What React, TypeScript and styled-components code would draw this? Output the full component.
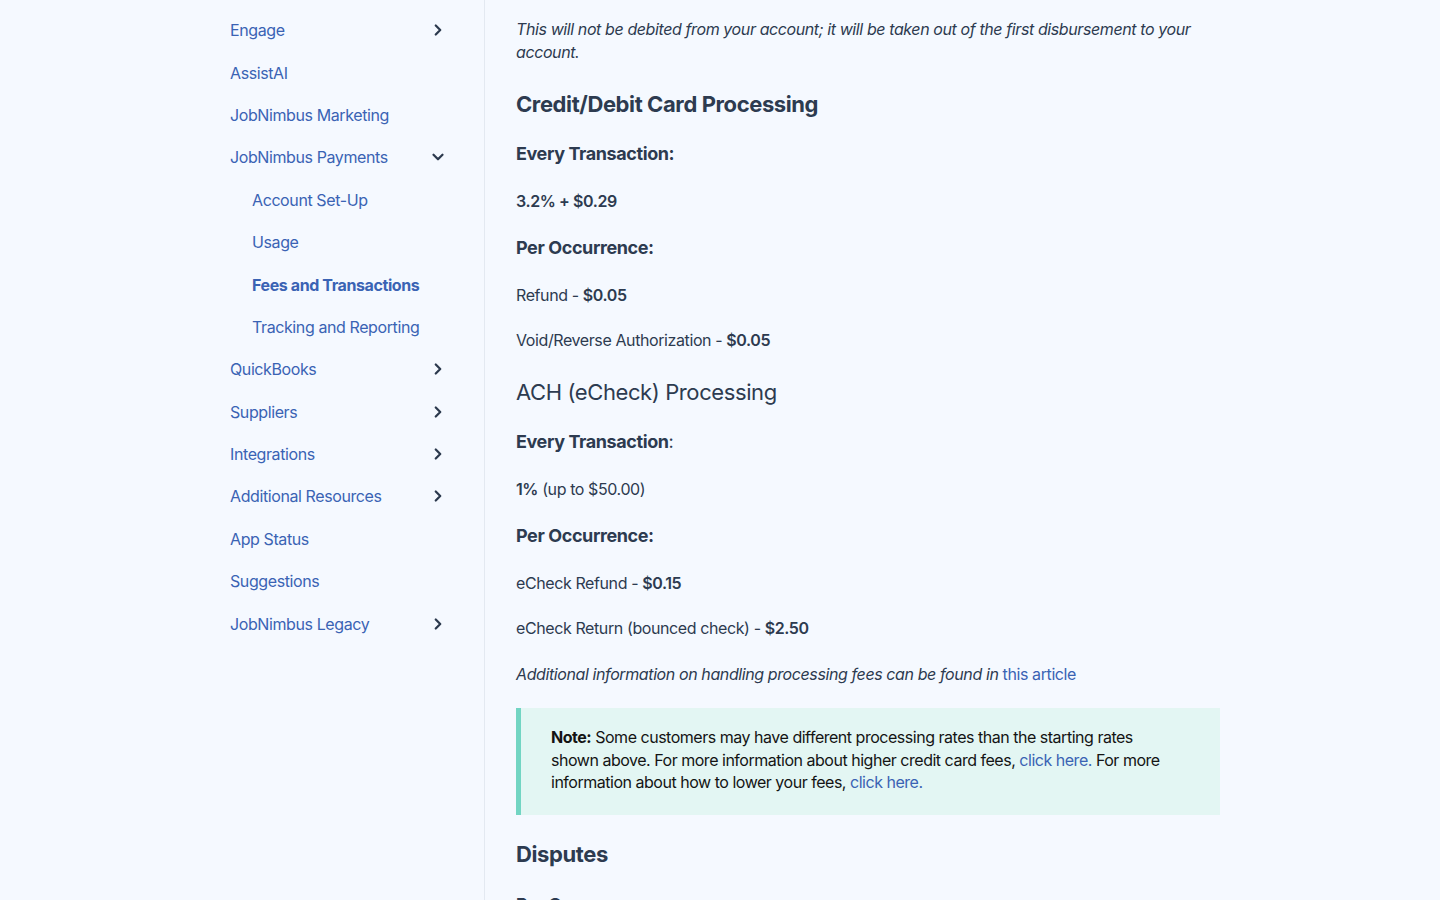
import React from "react";
import styled, { createGlobalStyle } from "styled-components";
import { ChevronRight, ChevronDown } from "lucide-react";

const GlobalStyle = createGlobalStyle`
  html, body {
    margin: 0;
    padding: 0;
    background: #f5f9ff;
    font-family: Inter, "Noto Sans", sans-serif;
    letter-spacing: -0.025em;
    color: #2c3a4e;
    -webkit-font-smoothing: antialiased;
  }
`;

const Layout = styled.div`
  display: flex;
  height: 900px;
  overflow: hidden;
`;

const Sidebar = styled.aside`
  width: 485px;
  flex-shrink: 0;
  border-right: 1px solid #e3e9f1;
  box-sizing: border-box;
  padding: 9px 36px 0 230px;
`;

const NavList = styled.ul`
  list-style: none;
  margin: 0;
  padding: 0;
`;

const NavItem = styled.li<{ $sub?: boolean; $active?: boolean }>`
  display: flex;
  align-items: center;
  justify-content: space-between;
  height: 42.4px;
  padding-left: ${({ $sub }) => ($sub ? "22px" : "0")};
  font-size: 16px;
  font-weight: ${({ $active }) => ($active ? 700 : 400)};
  color: #3a63b4;
  cursor: pointer;
`;

const Caret = styled.span`
  display: flex;
  align-items: center;
  justify-content: center;
  width: 20px;
  color: #2c3a4e;
`;

const Main = styled.main`
  flex: 1;
  padding: 18px 0 0 31px;
`;

const Article = styled.article`
  width: 704px;
  display: flex;
  flex-direction: column;
  gap: 22.5px;
`;

const Para = styled.p<{ $italic?: boolean }>`
  margin: 0;
  font-size: 16px;
  line-height: 23px;
  font-style: ${({ $italic }) => ($italic ? "italic" : "normal")};
  color: #2d3b50;
`;

const Heading = styled.h2<{ $light?: boolean }>`
  margin: 2px 0 0;
  font-size: 22px;
  line-height: 30px;
  font-weight: ${({ $light }) => ($light ? 400 : 700)};
  color: #2d3b50;
`;

const SubHeading = styled.h3`
  margin: 0;
  font-size: 18px;
  line-height: 26px;
  font-weight: 700;
  color: #2d3b50;
`;

const Strong = styled.strong<{ $semi?: boolean }>`
  font-weight: ${({ $semi }) => ($semi ? 600 : 700)};
`;

const Link = styled.a`
  color: #3a63b4;
  text-decoration: none;
  font-style: normal;
`;

const Callout = styled.div`
  background: #e3f6f3;
  border-left: 5px solid #72d5c3;
  padding: 18px 40px 21px 30px;
  font-size: 16px;
  line-height: 22.5px;
  letter-spacing: -0.03em;
  color: #141414;
`;

type NavEntry = {
  label: string;
  sub?: boolean;
  active?: boolean;
  caret?: "right" | "down";
};

const nav: NavEntry[] = [
  { label: "Engage", caret: "right" },
  { label: "AssistAI" },
  { label: "JobNimbus Marketing" },
  { label: "JobNimbus Payments", caret: "down" },
  { label: "Account Set-Up", sub: true },
  { label: "Usage", sub: true },
  { label: "Fees and Transactions", sub: true, active: true },
  { label: "Tracking and Reporting", sub: true },
  { label: "QuickBooks", caret: "right" },
  { label: "Suppliers", caret: "right" },
  { label: "Integrations", caret: "right" },
  { label: "Additional Resources", caret: "right" },
  { label: "App Status" },
  { label: "Suggestions" },
  { label: "JobNimbus Legacy", caret: "right" },
];

export default function App() {
  return (
    <>
      <GlobalStyle />
      <Layout>
        <Sidebar>
          <NavList>
            {nav.map((item) => (
              <NavItem key={item.label} $sub={item.sub} $active={item.active}>
                <span>{item.label}</span>
                {item.caret && (
                  <Caret>
                    {item.caret === "right" ? (
                      <ChevronRight size={18} strokeWidth={3} />
                    ) : (
                      <ChevronDown size={18} strokeWidth={3} />
                    )}
                  </Caret>
                )}
              </NavItem>
            ))}
          </NavList>
        </Sidebar>
        <Main>
          <Article>
            <Para $italic>
              This will not be debited from your account; it will be taken out of the first
              disbursement to your account.
            </Para>
            <Heading>Credit/Debit Card Processing</Heading>
            <SubHeading>Every Transaction:</SubHeading>
            <Para>
              <Strong $semi>3.2% + $0.29</Strong>
            </Para>
            <SubHeading>Per Occurrence:</SubHeading>
            <Para>
              Refund - <Strong $semi>$0.05</Strong>
            </Para>
            <Para>
              Void/Reverse Authorization - <Strong $semi>$0.05</Strong>
            </Para>
            <Heading $light>ACH (eCheck) Processing</Heading>
            <SubHeading>
              Every Transaction<span style={{ fontWeight: 400 }}>:</span>
            </SubHeading>
            <Para>
              <Strong $semi>1%</Strong> (up to $50.00)
            </Para>
            <SubHeading>Per Occurrence:</SubHeading>
            <Para>
              eCheck Refund - <Strong $semi>$0.15</Strong>
            </Para>
            <Para>
              eCheck Return (bounced check) - <Strong $semi>$2.50</Strong>
            </Para>
            <Para $italic>
              Additional information on handling processing fees can be found in{" "}
              <Link href="#">this article</Link>
            </Para>
            <Callout>
              <Strong>Note:</Strong> Some customers may have different processing rates than the
              starting rates shown above. For more information about higher credit card fees,{" "}
              <Link href="#">click here.</Link> For more information about how to lower your fees,{" "}
              <Link href="#">click here.</Link>
            </Callout>
            <Heading>Disputes</Heading>
            <SubHeading>Per Occurrence:</SubHeading>
          </Article>
        </Main>
      </Layout>
    </>
  );
}
